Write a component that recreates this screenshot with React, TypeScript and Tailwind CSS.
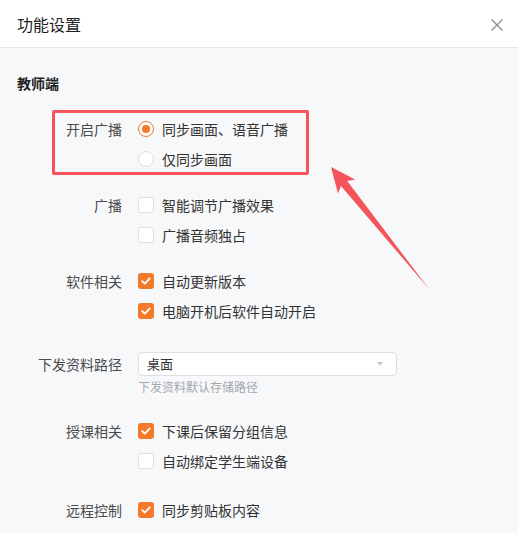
import React from 'react';

const font = { fontFamily: '"Noto Sans CJK SC", "Noto Sans", sans-serif' };

const Radio: React.FC<{ checked?: boolean; label: string }> = ({ checked, label }) => (
  <div className="flex h-[30px] items-center">
    {checked ? (
      <span className="flex h-4 w-4 items-center justify-center rounded-full border border-[#f5792a] bg-white">
        <span className="h-[8px] w-[8px] rounded-full bg-[#f5792a]" />
      </span>
    ) : (
      <span className="h-4 w-4 rounded-full border border-[#dcdfe6] bg-white" />
    )}
    <span className="ml-2 text-[14px] text-[#333]">{label}</span>
  </div>
);

const Check: React.FC<{ checked?: boolean; label: string }> = ({ checked, label }) => (
  <div className="flex h-[30px] items-center">
    {checked ? (
      <span className="flex h-4 w-4 items-center justify-center rounded-[3px] bg-[#f5792a]">
        <svg width="10" height="8" viewBox="0 0 10 8" fill="none">
          <path d="M1.2 4.2 L3.8 6.6 L8.8 1.4" stroke="white" strokeWidth="1.8" strokeLinecap="round" strokeLinejoin="round" />
        </svg>
      </span>
    ) : (
      <span className="h-4 w-4 rounded-[3px] border border-[#dcdfe6] bg-white" />
    )}
    <span className="ml-2 text-[14px] text-[#333]">{label}</span>
  </div>
);

const Group: React.FC<{ label: string; className?: string; children: React.ReactNode }> = ({ label, className, children }) => (
  <div className={`flex ${className ?? ''}`}>
    <div className="flex h-[30px] w-[105px] shrink-0 items-center justify-end text-[14px] text-[#4a4a4a]">{label}</div>
    <div className="ml-4 flex flex-col">{children}</div>
  </div>
);

export default function App() {
  return (
    <div className="relative min-h-[533px] w-[518px] overflow-hidden bg-[#f7f8fa]" style={font}>
      <div className="flex h-[48px] items-center justify-between border-b border-[#e4e6ea] bg-white pl-[17px] pr-[15px]">
        <h1 className="text-[16px] leading-none text-[#222]">功能设置</h1>
        <svg width="12" height="12" viewBox="0 0 12 12" className="mt-[2px]">
          <path d="M0.5 0.5 L11.5 11.5 M11.5 0.5 L0.5 11.5" stroke="#8a9099" strokeWidth="1.4" />
        </svg>
      </div>

      <div className="pl-[17px]">
        <div className="mt-[20px] flex h-[30px] items-center text-[14px] font-bold text-[#222]">教师端</div>

        <Group label="开启广播" className="mt-4">
          <Radio checked label="同步画面、语音广播" />
          <Radio label="仅同步画面" />
        </Group>

        <Group label="广播" className="mt-4">
          <Check label="智能调节广播效果" />
          <Check label="广播音频独占" />
        </Group>

        <Group label="软件相关" className="mt-4">
          <Check checked label="自动更新版本" />
          <Check checked label="电脑开机后软件自动开启" />
        </Group>

        <div className="mt-[23px] flex">
          <div className="flex h-[30px] w-[105px] shrink-0 items-center justify-end text-[14px] text-[#4a4a4a]">下发资料路径</div>
          <div className="ml-4 flex flex-col">
            <div className="mt-[3px] flex h-[24px] w-[259px] items-center justify-between rounded-[4px] border border-[#dcdfe6] bg-white pl-[8px] pr-[13px]">
              <span className="text-[13px] text-[#333]">桌面</span>
              <svg width="6" height="4" viewBox="0 0 6 4">
                <path d="M0 0 L6 0 L3 3.5 Z" fill="#c0c4cc" />
              </svg>
            </div>
            <div className="mt-[2px] text-[12px] leading-[18px] text-[#a3a7ae]">下发资料默认存储路径</div>
          </div>
        </div>

        <Group label="授课相关" className="mt-[20px]">
          <Check checked label="下课后保留分组信息" />
          <Check label="自动绑定学生端设备" />
        </Group>

        <Group label="远程控制" className="mt-[19px]">
          <Check checked label="同步剪贴板内容" />
        </Group>
      </div>

      {/* annotation overlay */}
      <div className="pointer-events-none absolute left-[52px] top-[110px] h-[65px] w-[257px] rounded-[2px] border-[3px] border-[#f4545a]" />
      <svg className="pointer-events-none absolute left-0 top-0" width="518" height="533" viewBox="0 0 518 533">
        <path d="M331 167 L355.2 179.6 L347.2 180.9 L429 289 L341 185.9 L338 193.4 Z" fill="#f4545a" />
      </svg>
    </div>
  );
}
